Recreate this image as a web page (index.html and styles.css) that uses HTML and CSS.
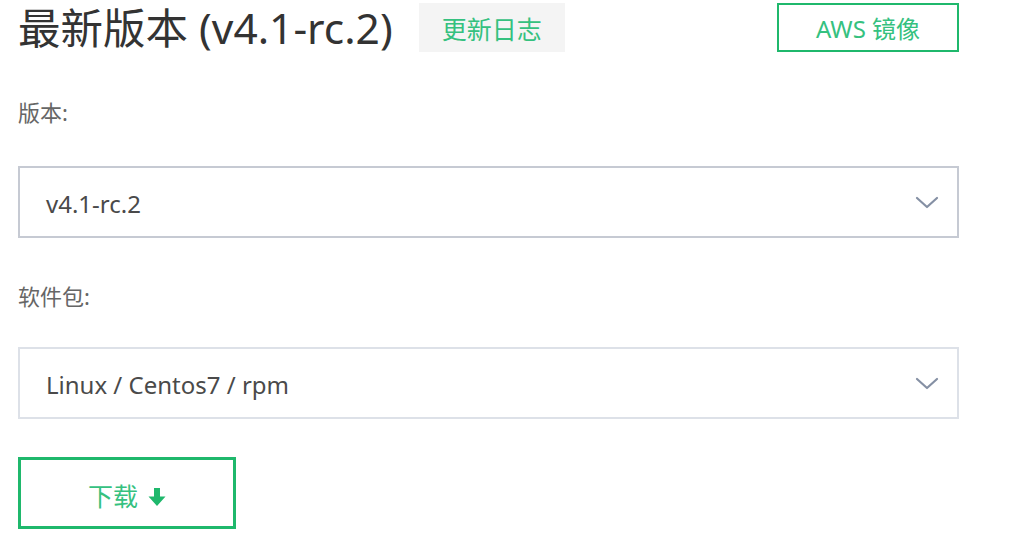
FILE: index.html
```html
<!DOCTYPE html>
<html lang="zh">
<head>
<meta charset="utf-8">
<title>最新版本</title>
<link rel="stylesheet" href="styles.css">
</head>
<body>
<div class="page">
  <div class="header">
    <h1 class="title">最新版本 (v4.1-rc.2)</h1>
    <a class="changelog">更新日志</a>
    <a class="mirror">AWS 镜像</a>
  </div>
  <div class="field">
    <div class="label">版本:</div>
    <div class="select select-active">
      <span class="value">v4.1-rc.2</span>
      <svg class="chevron" width="24" height="14" viewBox="0 0 24 14"><path d="M2 2 L12 11 L22 2" fill="none" stroke="#8590a4" stroke-width="2.2" stroke-linecap="round" stroke-linejoin="round"/></svg>
    </div>
  </div>
  <div class="field field-2">
    <div class="label">软件包:</div>
    <div class="select">
      <span class="value">Linux / Centos7 / rpm</span>
      <svg class="chevron" width="24" height="14" viewBox="0 0 24 14"><path d="M2 2 L12 11 L22 2" fill="none" stroke="#8590a4" stroke-width="2.2" stroke-linecap="round" stroke-linejoin="round"/></svg>
    </div>
  </div>
  <a class="download">下载
    <svg class="arrow" width="18" height="20" viewBox="0 0 18 20"><path d="M6 1 H12 V9.5 H17.5 L9 19 L0.5 9.5 H6 Z" fill="#1fb86c"/></svg>
  </a>
</div>
</body>
</html>
```

FILE: styles.css
```css
html, body {
  margin: 0;
  padding: 0;
  background: #ffffff;
}
body {
  font-family: "Noto Sans", "Noto Sans CJK SC", sans-serif;
  color: #333;
}
.page {
  width: 941px;
  padding: 3px 0 0 18px;
}
.header {
  display: flex;
  align-items: center;
  height: 49px;
}
.title {
  margin: 0;
  font-weight: 400;
  font-size: 42.5px;
  line-height: 49px;
  color: #333;
}
.changelog {
  margin-left: 26px;
  width: 146px;
  height: 49px;
  background: #f4f4f4;
  color: #35c17f;
  font-size: 25px;
  display: flex;
  align-items: center;
  justify-content: center;
}
.mirror {
  margin-left: auto;
  box-sizing: border-box;
  width: 182px;
  height: 49px;
  border: 2px solid #1fb86c;
  color: #35c17f;
  font-size: 24px;
  display: flex;
  align-items: center;
  justify-content: center;
}
.field {
  margin-top: 45px;
}
.field-2 {
  margin-top: 43px;
}
.label {
  font-size: 22px;
  line-height: 30px;
  color: #666;
  margin-bottom: 39px;
}
.field-2 .label {
  margin-bottom: 36px;
}
.select {
  box-sizing: border-box;
  height: 72px;
  border: 2px solid #dde1e8;
  display: flex;
  align-items: center;
  justify-content: space-between;
  padding: 2px 18px 0 26px;
}
.select-active {
  border-color: #c6cad3;
}
.value {
  font-size: 24px;
  color: #4a4a4a;
}
.chevron {
  display: block;
}
.download {
  margin-top: 38px;
  box-sizing: border-box;
  width: 218px;
  height: 72px;
  border: 3px solid #1fb86c;
  color: #35c17f;
  font-size: 25px;
  display: flex;
  align-items: center;
  justify-content: center;
  gap: 10px;
  padding-top: 4px;
}
.arrow {
  display: block;
  margin-top: 4px;
}
```
